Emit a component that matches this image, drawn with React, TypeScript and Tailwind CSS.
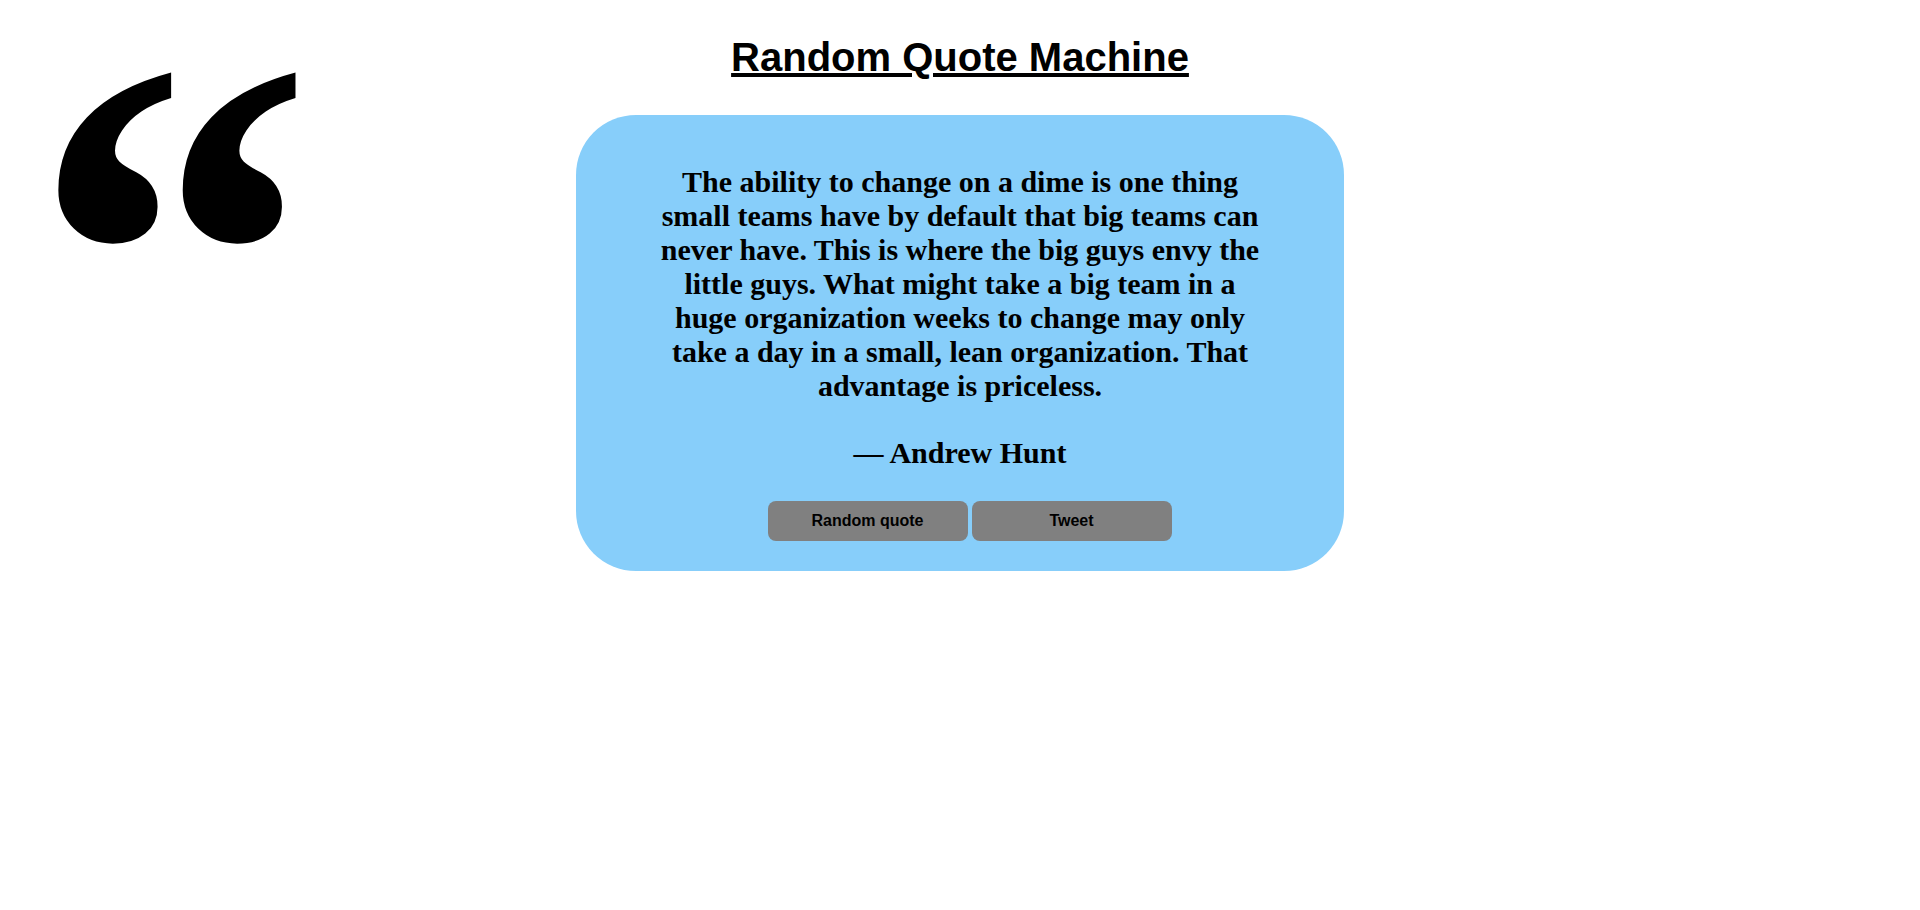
const quote = {
  text: "The ability to change on a dime is one thing small teams have by default that big teams can never have. This is where the big guys envy the little guys. What might take a big team in a huge organization weeks to change may only take a day in a small, lean organization. That advantage is priceless.",
  author: "Andrew Hunt",
};

function QuoteMark() {
  return (
    <span className="pointer-events-none absolute left-[31px] top-[4px] select-none font-['Liberation_Serif',serif] text-[566px] font-bold leading-[0.9] text-black">
      “
    </span>
  );
}

export default function App() {
  return (
    <div className="relative min-h-[910px] bg-white text-black">
      <QuoteMark />
      <h1 className="pt-[34px] text-center font-['Liberation_Sans',Arial,sans-serif] text-[40px] font-bold leading-[46px] underline">
        Random Quote Machine
      </h1>
      <div className="mx-auto mt-[35px] w-[768px] rounded-[60px] bg-[#87cefa] pb-[30px] pt-[50px] font-['Liberation_Serif',serif] font-bold">
        <p className="mx-auto w-[614px] text-center text-[30px] leading-[34px]">
          {quote.text}
        </p>
        <p className="mt-[33px] text-center text-[30px] leading-[34px]">
          — {quote.author}
        </p>
        <div className="mt-[31px] flex justify-center gap-[4px] pl-[19px] font-['Liberation_Sans',Arial,sans-serif]">
          <button className="h-[40px] w-[200px] rounded-[8px] bg-[#808080] text-[16px] font-bold text-black">
            Random quote
          </button>
          <button className="h-[40px] w-[200px] rounded-[8px] bg-[#808080] text-[16px] font-bold text-black">
            Tweet
          </button>
        </div>
      </div>
    </div>
  );
}
